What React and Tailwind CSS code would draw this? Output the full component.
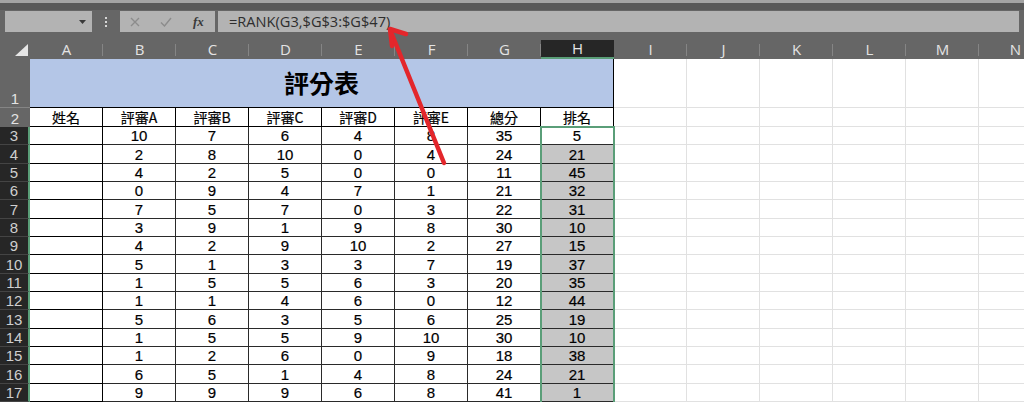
import React from "react";

// 評分表 rows: 評審A..E, 總分, 排名
const rows = [
  [10, 7, 6, 4, 8, 35, 5],
  [2, 8, 10, 0, 4, 24, 21],
  [4, 2, 5, 0, 0, 11, 45],
  [0, 9, 4, 7, 1, 21, 32],
  [7, 5, 7, 0, 3, 22, 31],
  [3, 9, 1, 9, 8, 30, 10],
  [4, 2, 9, 10, 2, 27, 15],
  [5, 1, 3, 3, 7, 19, 37],
  [1, 5, 5, 6, 3, 20, 35],
  [1, 1, 4, 6, 0, 12, 44],
  [5, 6, 3, 5, 6, 25, 19],
  [1, 5, 5, 9, 10, 30, 10],
  [1, 2, 6, 0, 9, 18, 38],
  [6, 5, 1, 4, 8, 24, 21],
  [9, 9, 9, 6, 8, 41, 1],
];

const letters = ["A", "B", "C", "D", "E", "F", "G", "H", "I", "J", "K", "L", "M", "N"];
const labels = ["姓名", "評審A", "評審B", "評審C", "評審D", "評審E", "總分", "排名"];
const spare = ["I", "J", "K", "L", "M", "N"];

const cellFont = { fontFamily: '"Noto Sans CJK TC", "Noto Sans", sans-serif' };
const numFont = { fontFamily: '"Liberation Sans", "Noto Sans CJK TC", sans-serif' };
const uiFont = { fontFamily: '"Open Sans", "Noto Sans", sans-serif' };
const rowNumFont = { fontFamily: '"Liberation Sans", "Open Sans", sans-serif' };

function FormulaBar() {
  return (
    <div className="h-[30px] bg-[#666666] flex items-start pt-[1px] px-[5px]" style={uiFont}>
      <div className="w-[87px] h-[21px] bg-[#b3b3b3] flex items-center justify-end pr-[6px]">
        <svg width="7" height="4" viewBox="0 0 7 4">
          <path d="M0 0 L7 0 L3.5 4 Z" fill="#3a3a3a" />
        </svg>
      </div>
      <div className="w-[28px] h-[21px] flex flex-col items-center justify-center gap-[2px]">
        <span className="w-[2px] h-[2px] bg-[#d6d6d6]" />
        <span className="w-[2px] h-[2px] bg-[#d6d6d6]" />
        <span className="w-[2px] h-[2px] bg-[#d6d6d6]" />
      </div>
      <div className="w-[95px] h-[21px] bg-[#b3b3b3] flex items-center pl-[10px]">
        <svg width="10" height="10" viewBox="0 0 10 10" className="mr-[20px]">
          <path d="M1 1 L9 9 M9 1 L1 9" stroke="#8c8c8c" strokeWidth="1.4" />
        </svg>
        <svg width="12" height="10" viewBox="0 0 12 10" className="mr-[21px]">
          <path d="M1 5.5 L4.5 9 L11 1" stroke="#8c8c8c" strokeWidth="1.4" fill="none" />
        </svg>
        <span className="text-[13px] italic font-bold text-[#3a3a3a] leading-none" style={{ fontFamily: '"Liberation Serif", serif' }}>
          fx
        </span>
      </div>
      <div className="ml-[3px] flex-1 h-[21px] bg-[#b3b3b3] flex items-center pl-[11px] text-[14.6px] text-[#2e2e2e]">
        =RANK(G3,$G$3:$G$47)
      </div>
    </div>
  );
}

function Sheet() {
  return (
    <div className="relative bg-white grid grid-cols-[30px_repeat(14,73px)] grid-rows-[19px_49px_19px_repeat(15,18.33px)]">
      {/* column headers */}
      <div className="bg-[#666666] flex items-end justify-end pr-[2px] pb-[3px]">
        <svg width="13" height="12" viewBox="0 0 13 12">
          <path d="M13 0 L13 12 L0 12 Z" fill="#e6e6e6" />
        </svg>
      </div>
      {letters.map((l) =>
        l === "H" ? (
          <div key={l} className="bg-[#262626] border-b-2 border-[#5a9e78] flex items-center justify-center text-[15px] text-[#e6e6e6]" style={uiFont}>
            {l}
          </div>
        ) : (
          <div key={l} className="bg-[#666666] flex items-center justify-center text-[15px] text-[#e3e3e3] relative" style={uiFont}>
            <span className="absolute right-0 top-[4px] bottom-[3px] w-px bg-[#858585]" />
            {l}
          </div>
        )
      )}

      {/* row 1: title */}
      <div className="bg-[#666666] border-b border-[#858585] flex items-end justify-center text-[15px] text-[#e3e3e3] leading-[17px]" style={rowNumFont}>
        1
      </div>
      <div className="col-span-8 bg-[#b4c6e7] border-r border-b border-black flex items-center justify-center text-[25px] font-bold text-black" style={cellFont}>
        評分表
      </div>
      {spare.map((l) => (
        <div key={l} className="border-r border-b border-[#e1e1e1]" />
      ))}

      {/* row 2: labels */}
      <div className="bg-[#666666] flex items-end justify-center text-[15px] text-[#e3e3e3] leading-[17px]" style={rowNumFont}>
        2
      </div>
      {labels.map((t) => (
        <div key={t} className="border-r border-b border-black flex items-end justify-center text-[14px] text-black leading-[16px] pb-px [-webkit-text-stroke:0.2px_black]" style={cellFont}>
          {t}
        </div>
      ))}
      {spare.map((l) => (
        <div key={l} className="border-r border-b border-[#e1e1e1]" />
      ))}

      {/* rows 3-17 */}
      {rows.map((r, i) => (
        <React.Fragment key={i}>
          <div className="bg-[#262626] border-b border-[#444444] border-r-2 border-r-[#5a9e78] flex items-end justify-center text-[15px] text-[#cfcfcf] leading-[16px]" style={rowNumFont}>
            {i + 3}
          </div>
          <div className="border-r border-b border-black" />
          {r.map((v, j) => (
            <div
              key={j}
              className={`border-r border-b border-[#2a2a2a] flex items-end justify-center text-[15px] text-black leading-[16px] [-webkit-text-stroke:0.2px_black] ${
                j === 6 && i > 0 ? "bg-[#c6c6c6]" : ""
              }`}
              style={numFont}
            >
              {v}
            </div>
          ))}
          {spare.map((l) => (
            <div key={l} className="border-r border-b border-[#e1e1e1]" />
          ))}
        </React.Fragment>
      ))}

      {/* selection frame around H3:H17 */}
      <div className="absolute left-[540px] top-[86px] w-[75px] h-[290px] border-2 border-[#5a9e78] pointer-events-none" />
    </div>
  );
}

export default function App() {
  return (
    <div className="w-[1024px] h-[402px] overflow-hidden bg-[#666666] relative">
      <div className="h-[3px] bg-[#a3a3a3]" />
      <div className="h-[7px] bg-[#585858]" />
      <FormulaBar />
      <Sheet />

      {/* red annotation arrow pointing at the formula */}
      <svg className="absolute inset-0 pointer-events-none" width="1024" height="402" viewBox="0 0 1024 402">
        <path d="M444 163 L391 32" stroke="#e3262b" strokeWidth="4.5" strokeLinecap="round" fill="none" />
        <path d="M406 34 L390 29 L392 46" stroke="#e3262b" strokeWidth="4.5" strokeLinecap="round" strokeLinejoin="round" fill="none" />
      </svg>
    </div>
  );
}
